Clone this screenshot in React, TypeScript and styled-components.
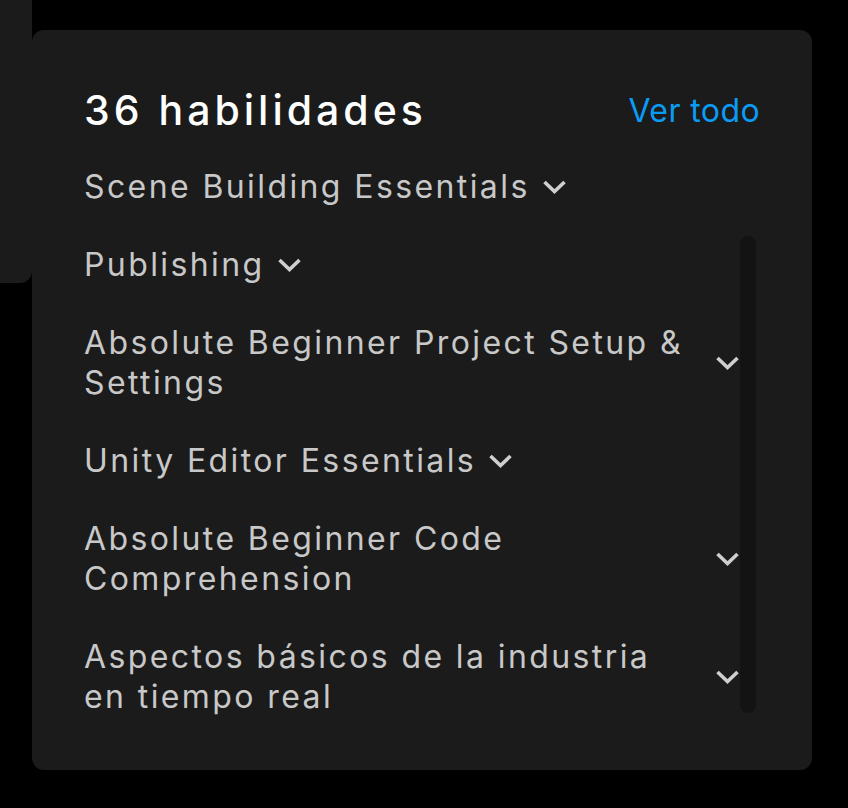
import React from "react";
import styled, { createGlobalStyle } from "styled-components";

const Global = createGlobalStyle`
  html, body { margin: 0; padding: 0; background: #000; }
  body {
    font-family: Inter, "Noto Sans", sans-serif;
    font-optical-sizing: none;
    font-variation-settings: "opsz" 14;
    -webkit-font-smoothing: antialiased;
  }
`;

const Page = styled.div`
  width: 848px;
  height: 808px;
  display: flex;
  align-items: flex-start;
  background: #000;
`;

const SidePanel = styled.div`
  width: 32px;
  height: 283px;
  background: #1b1b1b;
  border-bottom-right-radius: 12px;
  flex-shrink: 0;
`;

const Card = styled.section`
  margin-top: 30px;
  width: 780px;
  height: 740px;
  box-sizing: border-box;
  background: #1b1b1b;
  border-radius: 12px;
  padding: 52px 52px 0 52px;
  display: flex;
  flex-direction: column;
`;

const Header = styled.div`
  display: flex;
  justify-content: space-between;
  align-items: center;
  height: 56px;
  margin-bottom: 29px;
  flex: none;
`;

const Title = styled.h2`
  margin: 0;
  font-size: 41px;
  font-weight: 500;
  color: #ffffff;
  letter-spacing: 4px;
`;

const SeeAll = styled.a`
  font-size: 32px;
  color: #0a9cf5;
  text-decoration: none;
  letter-spacing: 0.4px;
`;

const Body = styled.div`
  display: flex;
  flex: none;
`;

const List = styled.ul`
  list-style: none;
  margin: 0;
  padding: 0;
  flex: 1;
  display: flex;
  flex-direction: column;
  gap: 38px;
`;

const Item = styled.li<{ $wide?: boolean }>`
  display: flex;
  align-items: center;
  justify-content: ${(p) => (p.$wide ? "space-between" : "flex-start")};
  gap: 12px;
  font-size: 32px;
  line-height: 40px;
  color: #c8c8c8;
  letter-spacing: 2.4px;
`;

const Label = styled.span<{ $wide?: boolean }>`
  max-width: ${(p) => (p.$wide ? "616px" : "none")};
`;

const Chevron = styled.svg`
  width: 25px;
  height: 16px;
  flex-shrink: 0;
`;

const ScrollTrack = styled.div`
  width: 20px;
  padding-top: 69px;
  flex-shrink: 0;
`;

const ScrollThumb = styled.div`
  width: 16px;
  height: 477px;
  border-radius: 8px;
  background: #131313;
`;

const Down = () => (
  <Chevron viewBox="0 0 25 16" fill="none">
    <path d="M2.5 3 L12.5 12.5 L22.5 3" stroke="#cfcfcf" strokeWidth="3.6" strokeLinejoin="miter" />
  </Chevron>
);

const skills: { name: string; wide?: boolean }[] = [
  { name: "Scene Building Essentials" },
  { name: "Publishing" },
  { name: "Absolute Beginner Project Setup & Settings", wide: true },
  { name: "Unity Editor Essentials" },
  { name: "Absolute Beginner Code Comprehension", wide: true },
  { name: "Aspectos básicos de la industria en tiempo real", wide: true },
];

export default function App() {
  return (
    <>
      <Global />
      <Page>
        <SidePanel />
        <Card>
          <Header>
            <Title>36 habilidades</Title>
            <SeeAll href="#">Ver todo</SeeAll>
          </Header>
          <Body>
            <List>
              {skills.map((s) => (
                <Item key={s.name} $wide={s.wide}>
                  <Label $wide={s.wide}>{s.name}</Label>
                  <Down />
                </Item>
              ))}
            </List>
            <ScrollTrack>
              <ScrollThumb />
            </ScrollTrack>
          </Body>
        </Card>
      </Page>
    </>
  );
}
